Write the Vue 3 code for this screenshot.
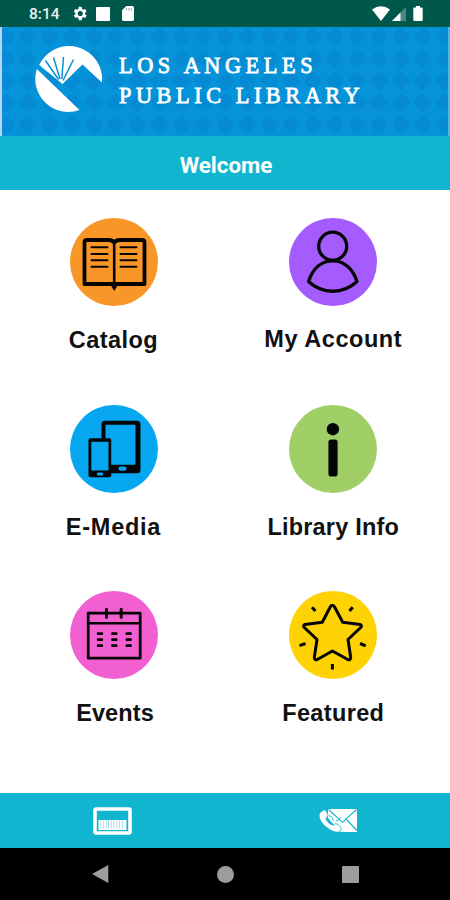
<script setup>
const tiles = [
  { id: 'catalog', label: 'Catalog', color: '#f89728' },
  { id: 'account', label: 'My Account', color: '#a45cff' },
  { id: 'media', label: 'E-Media', color: '#06a6f0' },
  { id: 'info', label: 'Library Info', color: '#a0cf67' },
  { id: 'events', label: 'Events', color: '#f25fd0' },
  { id: 'featured', label: 'Featured', color: '#ffd203' },
]
const dashColumns = [26.8, 41.2, 55.5]
const dashRows = [41.2, 47.2, 53.2]
</script>

<template>
  <div class="screen">
    <div class="status">
      <span class="time">8:14</span>
      <svg class="gear" width="15" height="15" viewBox="2 2 20 20"><path fill="#fff" fill-rule="evenodd" d="M19.4 13a7.500 7.500 0 0 0 0-2l2.100-1.600-2-3.500-2.500 1a7 7 0 0 0-1.700-1L15 3h-4l-.4 2.900a7 7 0 0 0-1.700 1l-2.500-1-2 3.500L6.500 11a7.500 7.500 0 0 0 0 2l-2.100 1.600 2 3.500 2.500-1a7 7 0 0 0 1.700 1L11 21h4l.4-2.900a7 7 0 0 0 1.700-1l2.500 1 2-3.500zM13 8.600a3.400 3.400 0 1 1 0 6.800 3.400 3.400 0 0 1 0-6.800z" /></svg>
      <span class="block"></span>
      <svg class="sd" width="12" height="15" viewBox="0 0 12 15"><path fill="#fff" d="M4.300 0H10.500Q12 0 12 1.500V13.500Q12 15 10.500 15H1.500Q0 15 0 13.500V4.300z" /><path stroke="#9ab5b0" stroke-width="1.200" d="M4.500 2v2.500M7 2v2.500M9.300 2v2.500" /></svg>
      <span class="spacer"></span>
      <svg width="18" height="15" viewBox="0 0 18 15"><path fill="#fff" d="M0 3.500Q9-3 18 3.500L9 15z" /></svg>
      <svg class="signal" width="14" height="14" viewBox="0 0 14 14"><path fill="#4d877e" d="M14 0V14H0z" /><path fill="#fff" d="M8.500 5.500V14H0z" /></svg>
      <svg class="battery" width="10" height="15" viewBox="0 0 10 15"><path fill="#fff" d="M3 0h4v1.500h1.500q1.200 0 1.200 1.200v11.100q0 1.200-1.200 1.200h-7q-1.200 0-1.200-1.200V2.700q0-1.200 1.200-1.200H3z" /></svg>
    </div>

    <header class="banner">
      <svg class="pattern" width="446" height="109">
        <defs>
          <pattern id="diamonds" x="14.800" y="-1.200" width="21.950" height="22" patternUnits="userSpaceOnUse">
            <path fill="#058bd3" d="M9 2.800Q11 1 13 2.800L19.200 9Q21 11 19.200 13L13 19.200Q11 21 9 19.200L2.800 13Q1 11 2.800 9z" />
          </pattern>
        </defs>
        <rect width="446" height="109" fill="url(#diamonds)" />
      </svg>
      <svg class="emblem" width="68" height="68" viewBox="35 45 68 68">
        <path fill="#fff" d="M39.200 65A33 33 0 0 1 101.900 82.500L82.500 64.500L62.500 84z" />
        <path fill="#fff" d="M36.800 69L79.500 110A33 33 0 0 1 36.800 69z" />
        <path fill="none" stroke="#0590d6" stroke-width="1.500" d="M45.500 60.500L58.500 79.500M53.500 57.500L60 79M63.500 57L61.800 79M73.500 59.500L63 80.500" />
      </svg>
      <div class="name"><div>LOS ANGELES</div><div>PUBLIC LIBRARY</div></div>
    </header>

    <div class="title">Welcome</div>

    <main class="grid">
      <div v-for="t in tiles" :key="t.id" class="tile" :class="t.id">
        <svg width="88" height="88" viewBox="0 0 88 88" fill="none" stroke="#050505" stroke-width="3">
          <circle cx="44" cy="44" r="44" :fill="t.color" stroke="none" />
          <g v-if="t.id === 'catalog'">
            <path stroke-width="3.800" stroke-linejoin="round" d="M44.200 25Q43 22 38.500 22H17Q14.500 22 14.500 24.500V66H74.500V24.500Q74.500 22 72 22H50Q45.500 22 44.200 25" />
            <path stroke-width="2.600" d="M44.200 24V67" />
            <path fill="#050505" stroke="none" d="M40 66H48.500L44.200 73z" />
            <path stroke-width="2" stroke-linecap="round" d="M21.500 29.300H37.500M21.500 36H37.500M21.500 42.300H37.500M21.500 48.700H37.500M50.500 29.300H66.500M50.500 36H66.500M50.500 42.300H66.500M50.500 48.700H66.500" />
          </g>
          <g v-else-if="t.id === 'account'" stroke-width="3.300" stroke-linejoin="round">
            <circle cx="43.700" cy="28.200" r="14" />
            <path d="M19.500 63.500C23.500 51 32 42.800 43.700 42.800S64 51 68 63.500C54 76.500 33.500 76.500 19.500 63.500z" />
          </g>
          <g v-else-if="t.id === 'media'" stroke="none">
            <rect x="31.500" y="15.800" width="39" height="52.400" rx="3.500" fill="#050505" />
            <rect x="35.500" y="19.800" width="30" height="40" rx="1" :fill="t.color" />
            <rect x="48.500" y="61.500" width="8" height="4.300" rx="2" :fill="t.color" />
            <rect x="18.500" y="33.200" width="22.700" height="39" rx="2" fill="#050505" />
            <rect x="21.300" y="36.800" width="17.200" height="28.700" :fill="t.color" />
            <rect x="26.800" y="67.400" width="6.500" height="3" rx="1.500" :fill="t.color" />
          </g>
          <g v-else-if="t.id === 'info'" stroke="none" fill="#050505">
            <circle cx="43.900" cy="24.200" r="6.200" />
            <rect x="39.400" y="34.500" width="9.200" height="37" rx="2.800" />
          </g>
          <g v-else-if="t.id === 'events'">
            <rect x="18.200" y="22.200" width="52" height="45" stroke-width="2.800" stroke-linejoin="round" />
            <path stroke-width="2.600" d="M18 32.200H70.500" />
            <path stroke-linecap="round" d="M36.500 18.200V26.200M51.200 18.200V26.200" />
            <template v-for="x in dashColumns" :key="x">
              <rect v-for="y in dashRows" :key="y" :x="x" :y="y" width="6.300" height="2.700" rx="1" fill="#050505" stroke="none" />
            </template>
          </g>
          <g v-else>
            <path stroke-width="3" stroke-linejoin="round" d="M41.500 15.500Q43.400 12.800 45.300 15.500L53.700 31.200L71 33.500Q73.500 34.500 71.700 36.500L59 48.500L61.700 66.500Q61.500 69.500 58.800 68.500L43.400 60L28.300 68.500Q25.500 69.500 25.300 66.500L28 48.500L15.300 36.500Q13.500 34.500 16 33.500L33.300 31.200z" />
            <path d="M23 16.200L26.400 20M63.700 16.200L60.400 20M10.500 54.700L16.500 52.500M71 52.500L76.700 54.900M43.400 73V78.500" />
          </g>
        </svg>
        <div class="label">{{ t.label }}</div>
      </div>
    </main>

    <footer class="actions">
      <svg width="39" height="28" viewBox="0 0 39 28">
        <rect x="2" y="2" width="35" height="24" rx="1" fill="none" stroke="#fff" stroke-width="3.600" />
        <rect x="5.500" y="13" width="28" height="10" fill="#fff" />
        <path stroke="#75d3e3" stroke-width=".6" d="M8 13.500v8M10.500 13.500v8M13.500 13.500v8M15.500 13.500v8M18.500 13.500v8M21 13.500v8M24 13.500v8M26.500 13.500v8M29.500 13.500v8" />
      </svg>
      <svg width="39" height="25" viewBox="0 0 39 25">
        <path fill="#fff" d="M9 1H38V24H21L9 10z" />
        <path fill="none" stroke="#10b6d0" stroke-width="1.100" d="M9.500 1.500L23.500 14.300L37.500 1.500M27.500 11.500L38 22.500" />
        <path fill="#fff" stroke="#10b6d0" stroke-width=".8" d="M5.800 1.700Q8 3 9 7.500Q8 9.500 6.800 10.500Q9.500 16.300 14.500 17.200L16.500 15.300Q21 17 22.500 20.500L21 23.500Q17 25.500 10.500 21.500Q1 15.500 0 8Q0 3.500 5.800 1.700z" />
        <path fill="none" stroke="#10b6d0" stroke-width=".9" d="M10 7.500Q14 8.500 14.500 13M17 13Q21 12.500 21.500 9" />
      </svg>
    </footer>

    <nav class="system">
      <svg width="17" height="18" viewBox="0 0 17 18"><path fill="#9d9d9d" d="M0 9L16.300 0V18z" /></svg>
      <span class="home"></span>
      <span class="recent"></span>
    </nav>
  </div>
</template>

<style>
body { margin: 0; background: #fff; }
</style>

<style scoped>
.screen { width: 450px; height: 900px; display: flex; flex-direction: column; background: #fff; overflow: hidden; }
svg { display: block; flex: none; }
.status { height: 27px; flex: none; box-sizing: border-box; padding: 0 27px 0 29px; display: flex; align-items: center; background: #00574b; }
.time { width: 43px; font: 500 15.500px/20px Roboto, sans-serif; color: #e9f2f0; padding-top: 1px; box-sizing: border-box; }
.block { width: 13.500px; height: 14px; margin: 0 12px 0 9px; background: #fff; border-radius: 1px; }
.spacer { flex: 1; }
.signal { margin: 0 7px 0 2px; }
.banner { position: relative; height: 109px; flex: none; display: flex; box-sizing: border-box; padding: 18px 0 0 33px; background: #0594d9; border-left: 2px solid #b7d3ef; border-right: 2px solid #58b4e8; }
.pattern { position: absolute; left: 0; top: 0; }
.emblem { position: relative; }
.name { position: relative; padding: 6px 0 0 16px; font: 22.300px/30px "Liberation Serif", serif; letter-spacing: 4.550px; color: #fff; white-space: nowrap; -webkit-text-stroke: .8px #fff; }
.title { height: 54px; flex: none; display: flex; align-items: center; justify-content: center; box-sizing: border-box; padding: 4px 0 0 2px; background: #10b6d0; color: #fff; font: 700 22.300px/28px Roboto, sans-serif; }
.grid { height: 603px; flex: none; box-sizing: border-box; padding: 28px 7px 0 3.500px; display: grid; grid-template-columns: 220px 219.500px; grid-auto-rows: 186.700px; }
.tile { display: flex; flex-direction: column; align-items: center; }
.label { margin-top: 20px; font: 700 23.500px/28px "Liberation Sans", sans-serif; letter-spacing: .2px; color: #111; white-space: nowrap; }
.catalog .label { letter-spacing: .45px; }
.account .label { letter-spacing: .55px; margin-top: 19px; }
.media .label { letter-spacing: .75px; }
.events .label { padding-left: 3px; letter-spacing: .1px; }
.featured .label { letter-spacing: .35px; }
.actions { height: 55px; flex: none; display: flex; justify-content: space-between; align-items: center; box-sizing: border-box; padding: 0 92px 0 93px; background: #10b6d0; }
.system { flex: 1; display: flex; justify-content: space-between; align-items: center; padding: 0 91.500px; background: #000; }
.home { width: 17px; height: 17px; border-radius: 50%; background: #9d9d9d; }
.recent { width: 17px; height: 17px; border-radius: 1px; background: #9d9d9d; }
</style>
